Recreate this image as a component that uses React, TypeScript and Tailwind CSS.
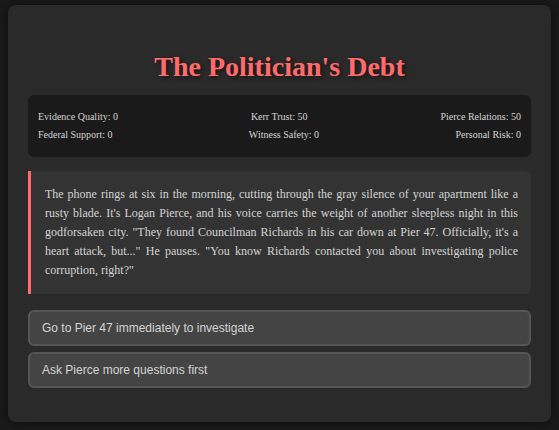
const stats = [
  ["Evidence Quality: 0", "Kerr Trust: 50", "Pierce Relations: 50"],
  ["Federal Support: 0", "Witness Safety: 0", "Personal Risk: 0"],
];

const choices = [
  "Go to Pier 47 immediately to investigate",
  "Ask Pierce more questions first",
];

export default function App() {
  return (
    <div className="min-h-screen w-full bg-[#1a1a1a] px-2 pt-[5px] pb-3 font-['Liberation_Serif',serif]">
      <div className="rounded-lg bg-[#2a2a2a] px-5 pt-5 pb-[34px] shadow-[0_0_12px_rgba(0,0,0,0.5)]">
        <h1 className="mt-[25px] mb-[11px] text-center text-[28px] font-bold leading-[34px] text-[#ff6b6b] [text-shadow:2px_2px_4px_rgba(0,0,0,0.5)]">
          The Politician's Debt
        </h1>

        <div className="mb-[14px] flex flex-col gap-[6px] rounded-md bg-[#1a1a1a] px-[10px] py-[16px] text-[10px] leading-[12px] text-[#d4d4d4]">
          {stats.map((row, i) => (
            <div key={i} className="flex justify-between">
              {row.map((s) => (
                <span key={s}>{s}</span>
              ))}
            </div>
          ))}
        </div>

        <div className="mb-[16px] rounded-r-md border-l-[3px] border-[#ff6b6b] bg-[#333] py-[14px] pr-[13px] pl-[14px] text-justify text-[12px] leading-[19px] text-[#d4d4d4]">
          The phone rings at six in the morning, cutting through the gray silence of your apartment like a rusty blade. It's Logan Pierce, and his voice carries the weight of another sleepless night in this godforsaken city. "They found Councilman Richards in his car down at Pier 47. Officially, it's a heart attack, but..." He pauses. "You know Richards contacted you about investigating police corruption, right?"
        </div>

        <div className="flex flex-col gap-[6px]">
          {choices.map((c) => (
            <button
              key={c}
              className="h-[36px] w-full rounded-md border-2 border-[#555] bg-[#444] px-3 text-left font-['Liberation_Sans',sans-serif] text-[12px] text-[#d4d4d4]"
            >
              {c}
            </button>
          ))}
        </div>
      </div>
    </div>
  );
}
